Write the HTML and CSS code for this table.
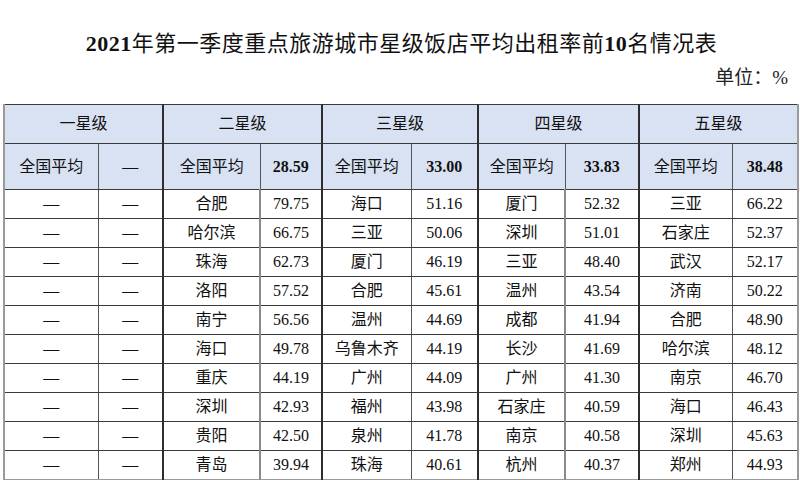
FILE: index.html
```html
<!DOCTYPE html>
<html lang="zh-CN">
<head>
<meta charset="utf-8">
<title>2021年第一季度重点旅游城市星级饭店平均出租率前10名情况表</title>
<link rel="stylesheet" href="styles.css">
</head>
<body>
<div class="page">
  <h1 class="title"><b>2021</b>年第一季度重点旅游城市星级饭店平均出租率前<b>10</b>名情况表</h1>
  <div class="unit">单位：%</div>
  <table class="stats">
    <colgroup>
      <col class="c1"><col class="c2"><col class="c3"><col class="c4"><col class="c5">
      <col class="c6"><col class="c7"><col class="c8"><col class="c9"><col class="c10">
    </colgroup>
    <thead>
      <tr class="h1">
        <th colspan="2" class="grp">一星级</th>
        <th colspan="2" class="grp">二星级</th>
        <th colspan="2" class="grp">三星级</th>
        <th colspan="2" class="grp">四星级</th>
        <th colspan="2">五星级</th>
      </tr>
      <tr class="h2">
        <th class="inner">全国平均</th><th class="grp">—</th>
        <th class="inner">全国平均</th><th class="grp num">28.59</th>
        <th class="inner">全国平均</th><th class="grp num">33.00</th>
        <th class="inner">全国平均</th><th class="grp num">33.83</th>
        <th class="inner">全国平均</th><th class="num">38.48</th>
      </tr>
    </thead>
    <tbody>
      <tr><td class="inner">—</td><td class="grp">—</td><td class="inner">合肥</td><td class="grp">79.75</td><td class="inner">海口</td><td class="grp">51.16</td><td class="inner">厦门</td><td class="grp">52.32</td><td class="inner">三亚</td><td>66.22</td></tr>
      <tr><td class="inner">—</td><td class="grp">—</td><td class="inner">哈尔滨</td><td class="grp">66.75</td><td class="inner">三亚</td><td class="grp">50.06</td><td class="inner">深圳</td><td class="grp">51.01</td><td class="inner">石家庄</td><td>52.37</td></tr>
      <tr><td class="inner">—</td><td class="grp">—</td><td class="inner">珠海</td><td class="grp">62.73</td><td class="inner">厦门</td><td class="grp">46.19</td><td class="inner">三亚</td><td class="grp">48.40</td><td class="inner">武汉</td><td>52.17</td></tr>
      <tr><td class="inner">—</td><td class="grp">—</td><td class="inner">洛阳</td><td class="grp">57.52</td><td class="inner">合肥</td><td class="grp">45.61</td><td class="inner">温州</td><td class="grp">43.54</td><td class="inner">济南</td><td>50.22</td></tr>
      <tr><td class="inner">—</td><td class="grp">—</td><td class="inner">南宁</td><td class="grp">56.56</td><td class="inner">温州</td><td class="grp">44.69</td><td class="inner">成都</td><td class="grp">41.94</td><td class="inner">合肥</td><td>48.90</td></tr>
      <tr><td class="inner">—</td><td class="grp">—</td><td class="inner">海口</td><td class="grp">49.78</td><td class="inner">乌鲁木齐</td><td class="grp">44.19</td><td class="inner">长沙</td><td class="grp">41.69</td><td class="inner">哈尔滨</td><td>48.12</td></tr>
      <tr><td class="inner">—</td><td class="grp">—</td><td class="inner">重庆</td><td class="grp">44.19</td><td class="inner">广州</td><td class="grp">44.09</td><td class="inner">广州</td><td class="grp">41.30</td><td class="inner">南京</td><td>46.70</td></tr>
      <tr><td class="inner">—</td><td class="grp">—</td><td class="inner">深圳</td><td class="grp">42.93</td><td class="inner">福州</td><td class="grp">43.98</td><td class="inner">石家庄</td><td class="grp">40.59</td><td class="inner">海口</td><td>46.43</td></tr>
      <tr><td class="inner">—</td><td class="grp">—</td><td class="inner">贵阳</td><td class="grp">42.50</td><td class="inner">泉州</td><td class="grp">41.78</td><td class="inner">南京</td><td class="grp">40.58</td><td class="inner">深圳</td><td>45.63</td></tr>
      <tr><td class="inner">—</td><td class="grp">—</td><td class="inner">青岛</td><td class="grp">39.94</td><td class="inner">珠海</td><td class="grp">40.61</td><td class="inner">杭州</td><td class="grp">40.37</td><td class="inner">郑州</td><td>44.93</td></tr>
    </tbody>
  </table>
</div>
</body>
</html>
```

FILE: styles.css
```css
html, body {
  margin: 0;
  padding: 0;
  background: #ffffff;
}

body {
  font-family: "Liberation Serif", "Noto Sans CJK SC", serif;
  color: #111;
}

.page {
  width: 800px;
  height: 480px;
  overflow: hidden;
  padding-left: 3px;
  box-sizing: border-box;
}

.title {
  margin: 0;
  padding-top: 29px;
  height: 30px;
  line-height: 30px;
  font-size: 22px;
  font-weight: normal;
  text-align: center;
  color: #111;
  letter-spacing: 0.5px;
}

.title b {
  font-weight: bold;
}

.unit {
  margin-top: 7px;
  height: 24px;
  line-height: 24px;
  font-size: 19px;
  text-align: right;
  padding-right: 12px;
  color: #222;
}

.stats {
  margin-top: 14px;
  width: 794px;
  border-collapse: collapse;
  table-layout: fixed;
  font-size: 16px;
  border-top: 1px solid #333;
  border-bottom: 2px solid #9a9a9a;
  border-left: 2px solid #9a9a9a;
  border-right: 2px solid #9a9a9a;
}

.c1 { width: 94px; }
.c2 { width: 65px; }
.c3 { width: 97px; }
.c4 { width: 62px; }
.c5 { width: 89px; }
.c6 { width: 67px; }
.c7 { width: 87px; }
.c8 { width: 74px; }
.c9 { width: 93px; }
.c10 { width: 66px; }

.stats th,
.stats td {
  padding: 0;
  text-align: center;
  line-height: 20px;
  border-top: 1px solid #3a3a3a;
  border-bottom: 1px solid #3a3a3a;
  white-space: nowrap;
  overflow: hidden;
}

.stats th {
  background: #d9e2f3;
  font-weight: normal;
  color: #111;
}

.stats .inner {
  border-right: 1px solid #555;
}

.stats .grp {
  border-right: 2px solid #2e2e2e;
}

.stats tbody .inner:nth-child(3),
.stats tbody .inner:nth-child(7) {
  border-right: 2px solid #8a8a8a;
}

.stats th.num {
  font-weight: bold;
}

.h1 { height: 39px; }
.h2 { height: 46px; }
.stats tbody tr { height: 29px; }
```
